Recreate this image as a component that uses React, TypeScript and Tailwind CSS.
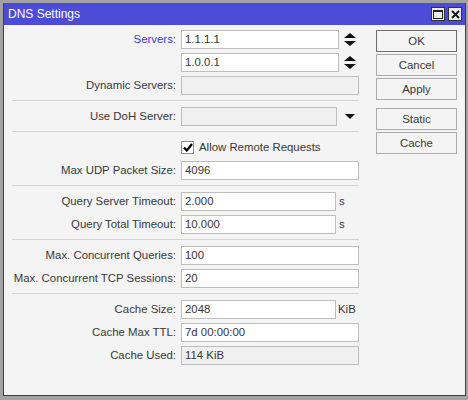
import React from "react";

const font = { fontFamily: '"Liberation Sans", Arial, sans-serif' };

function Field({
  value,
  className,
  readOnly,
}: {
  value?: string;
  className: string;
  readOnly?: boolean;
}) {
  return (
    <div
      className={`h-[19px] border border-[#bdbdbd] px-[3px] leading-[17px] whitespace-nowrap overflow-hidden ${
        readOnly ? "bg-[#f0f0f0]" : "bg-white"
      } ${className}`}
    >
      {value}
    </div>
  );
}

function Row({
  label,
  labelClass = "",
  children,
}: {
  label?: string;
  labelClass?: string;
  children: React.ReactNode;
}) {
  return (
    <div className="flex items-center h-[19px]">
      <div className={`w-[172px] text-right whitespace-nowrap ${labelClass}`}>{label}</div>
      <div className="ml-[5px] flex items-center">{children}</div>
    </div>
  );
}

function Separator() {
  return <div className="ml-[8px] h-px bg-[#d4d4d4] mt-[5px] mb-[6px]" />;
}

function SpinIcon() {
  return (
    <svg width="12" height="13" viewBox="0 0 12 13" className="ml-[5px]">
      <polygon points="0,5 6,0 12,5" fill="#111" />
      <polygon points="0,8 12,8 6,13" fill="#111" />
    </svg>
  );
}

function Button({ children, main }: { children: React.ReactNode; main?: boolean }) {
  return (
    <div
      className={`h-[22px] w-[81px] border bg-[#f4f4f4] text-center leading-[20px] ${
        main ? "border-[#6e6e6e]" : "border-[#ababab]"
      }`}
    >
      {children}
    </div>
  );
}

export default function App() {
  return (
    <div
      className="w-[468px] h-[400px] bg-[#a3a3a3] pt-[3px] pl-[3px] pr-[2px] pb-[4px] text-[11.4px] text-[#383838]"
      style={font}
    >
      <div className="h-full flex flex-col border border-t-0 border-[#3f3f3f] bg-[#f4f4f4]">
        {/* title bar */}
        <div className="h-[22px] bg-[#4c4cd6] flex items-center pl-[4px] pr-[3px]">
          <span className="text-white text-[12px] flex-1">DNS Settings</span>
          <div className="flex gap-[3px]">
            <div className="w-[14px] h-[14px] bg-[#ececec] border border-[#333] flex items-center justify-center">
              <div className="w-[10px] h-[9px] border border-[#222] border-t-[2px]" />
            </div>
            <div className="w-[14px] h-[14px] bg-[#ececec] border border-[#333] flex items-center justify-center">
              <svg width="9" height="9" viewBox="0 0 9 9">
                <path d="M1 1 L8 8 M8 1 L1 8" stroke="#111" strokeWidth="1.8" />
              </svg>
            </div>
          </div>
        </div>

        {/* body */}
        <div className="flex pt-[5px]">
          <div className="w-[355px] flex flex-col">
            <div className="flex flex-col gap-[4px]">
              <Row label="Servers:" labelClass="text-[#3a3ae6]">
                <Field value="1.1.1.1" className="w-[158px]" />
                <SpinIcon />
              </Row>
              <Row>
                <Field value="1.0.0.1" className="w-[158px]" />
                <SpinIcon />
              </Row>
              <Row label="Dynamic Servers:">
                <Field readOnly className="w-[178px]" />
              </Row>
            </div>
            <Separator />
            <Row label="Use DoH Server:">
              <Field readOnly className="w-[156px]" />
              <svg width="10" height="5" viewBox="0 0 10 5" className="ml-[8px]">
                <polygon points="0,0 10,0 5,5" fill="#111" />
              </svg>
            </Row>
            <Separator />
            <div className="flex flex-col gap-[4px]">
              <Row>
                <div className="w-[13px] h-[13px] border border-[#8c8c8c] bg-white flex items-center justify-center">
                  <svg width="10" height="9" viewBox="0 0 10 9">
                    <path d="M1 4.5 L3.8 7.5 L9 1" stroke="#000" strokeWidth="2.2" fill="none" />
                  </svg>
                </div>
                <span className="ml-[5px] whitespace-nowrap">Allow Remote Requests</span>
              </Row>
              <Row label="Max UDP Packet Size:">
                <Field value="4096" className="w-[178px]" />
              </Row>
            </div>
            <Separator />
            <div className="flex flex-col gap-[4px]">
              <Row label="Query Server Timeout:">
                <Field value="2.000" className="w-[155px]" />
                <span className="ml-[3px]">s</span>
              </Row>
              <Row label="Query Total Timeout:">
                <Field value="10.000" className="w-[155px]" />
                <span className="ml-[3px]">s</span>
              </Row>
            </div>
            <Separator />
            <div className="flex flex-col gap-[4px]">
              <Row label="Max. Concurrent Queries:">
                <Field value="100" className="w-[178px]" />
              </Row>
              <Row label="Max. Concurrent TCP Sessions:">
                <Field value="20" className="w-[178px]" />
              </Row>
            </div>
            <Separator />
            <div className="flex flex-col gap-[4px]">
              <Row label="Cache Size:">
                <Field value="2048" className="w-[155px]" />
                <span className="ml-[2px]">KiB</span>
              </Row>
              <Row label="Cache Max TTL:">
                <Field value="7d 00:00:00" className="w-[178px]" />
              </Row>
              <Row label="Cache Used:">
                <Field readOnly value="114 KiB" className="w-[178px]" />
              </Row>
            </div>
          </div>

          <div className="ml-[17px] flex flex-col gap-[2px]">
            <Button main>OK</Button>
            <Button>Cancel</Button>
            <Button>Apply</Button>
            <div className="mt-[6px]">
              <Button>Static</Button>
            </div>
            <Button>Cache</Button>
          </div>
        </div>
      </div>
    </div>
  );
}
